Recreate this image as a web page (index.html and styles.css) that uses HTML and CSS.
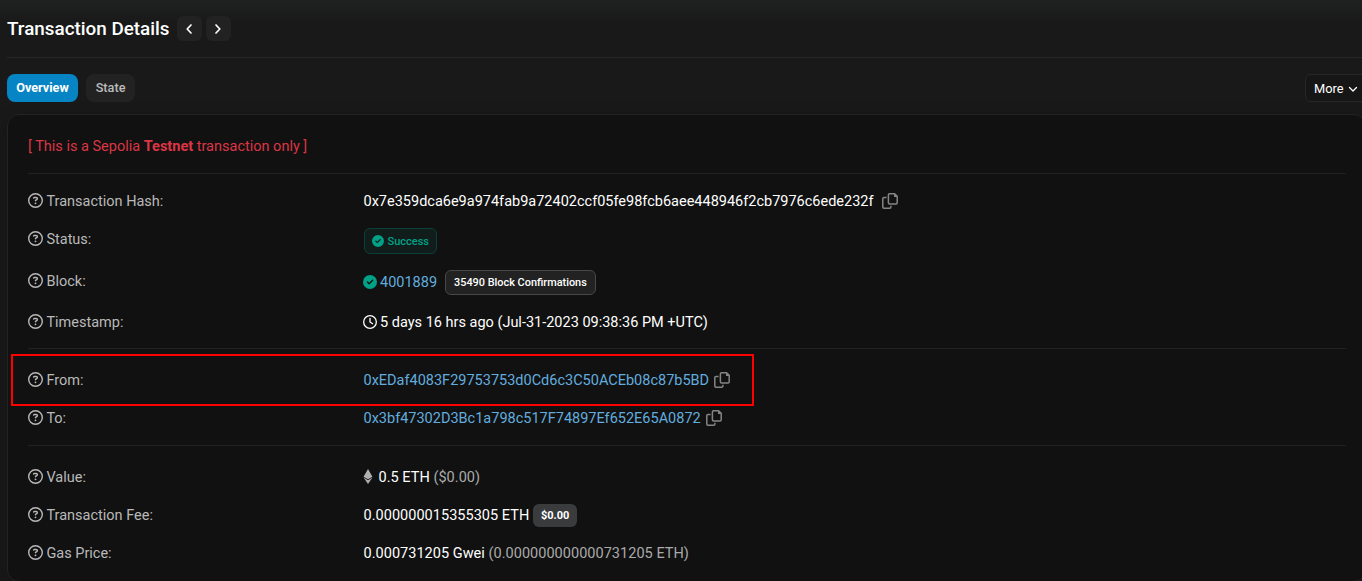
FILE: index.html
```html
<!DOCTYPE html>
<html lang="en">
<head>
<meta charset="utf-8">
<title>Transaction Details</title>
<link rel="stylesheet" href="styles.css">
</head>
<body>
<svg width="0" height="0" class="sprite" aria-hidden="true">
  <symbol id="help" viewBox="0 0 512 512"><path d="M464 256A208 208 0 1 0 48 256a208 208 0 1 0 416 0zM0 256a256 256 0 1 1 512 0A256 256 0 1 1 0 256zm169.8-90.7c7.9-22.3 29.1-37.3 52.8-37.3h58.3c34.9 0 63.1 28.3 63.1 63.1c0 22.6-12.1 43.5-31.7 54.8L280 264.4c-.2 13-10.9 23.6-24 23.6c-13.3 0-24-10.7-24-24V250.5c0-8.6 4.6-16.5 12.1-20.8l44.3-25.4c4.7-2.7 7.6-7.7 7.6-13.1c0-8.4-6.8-15.1-15.1-15.1H222.6c-3.4 0-6.4 2.1-7.5 5.3l-.4 1.2c-4.4 12.5-18.2 19-30.6 14.6s-19-18.2-14.6-30.6l.4-1.2zM224 352a32 32 0 1 1 64 0 32 32 0 1 1 -64 0z"/></symbol>
  <symbol id="check" viewBox="0 0 512 512"><path d="M256 512A256 256 0 1 0 256 0a256 256 0 1 0 0 512zM369 209L241 337c-9.4 9.4-24.6 9.4-33.9 0l-64-64c-9.4-9.4-9.4-24.6 0-33.9s24.6-9.4 33.9 0l47 47L335 175c9.4-9.4 24.6-9.4 33.9 0s9.4 24.6 0 33.9z"/></symbol>
  <symbol id="clock" viewBox="0 0 512 512"><path d="M464 256A208 208 0 1 1 48 256a208 208 0 1 1 416 0zM0 256a256 256 0 1 0 512 0A256 256 0 1 0 0 256zM232 120V256c0 8 4 15.5 10.7 20l96 64c11 7.4 25.9 4.4 33.3-6.7s4.4-25.9-6.7-33.3L280 243.2V120c0-13.3-10.7-24-24-24s-24 10.7-24 24z"/></symbol>
  <symbol id="eth" viewBox="0 0 320 512"><path d="M311.9 260.8L160 353.6 8 260.8 160 0l151.9 260.8zM160 383.4L8 290.6 160 512l152-221.4-152 92.8z"/></symbol>
  <symbol id="copy" viewBox="0 0 16 16"><path fill="none" stroke="currentColor" stroke-width="1.5" stroke-linejoin="round" d="M7.6.8h5l2.6 2.6v6.3a1.2 1.2 0 0 1-1.2 1.2H7.6a1.2 1.2 0 0 1-1.2-1.2V2A1.2 1.2 0 0 1 7.6.8zM4.6 4.4H2A1.2 1.2 0 0 0 .8 5.6V14A1.2 1.2 0 0 0 2 15.2h5.7A1.2 1.2 0 0 0 8.9 14v-1.3"/><path d="M12 .6v3.4h3.4z"/></symbol>
</svg>

<header class="page-head">
  <h1 class="title">Transaction Details</h1>
  <button class="nav-btn"><svg viewBox="0 0 10 12"><path d="M7 2 3.2 6 7 10"/></svg></button>
  <button class="nav-btn"><svg viewBox="0 0 10 12"><path d="M3 2 6.8 6 3 10"/></svg></button>
</header>

<nav class="tabs">
  <a class="tab tab-active">Overview</a>
  <a class="tab">State</a>
  <button class="more">More<svg viewBox="0 0 10 8"><path d="M1.5 2.5 5 6 8.5 2.5"/></svg></button>
</nav>

<main class="card">
  <p class="notice">[ This is a Sepolia <strong>Testnet</strong> transaction only ]</p>

  <section class="group group-main">
    <div class="row"><div class="label"><svg class="help"><use href="#help"/></svg>Transaction Hash:</div><div class="value"><span class="hash">0x7e359dca6e9a974fab9a72402ccf05fe98fcb6aee448946f2cb7976c6ede232f</span><svg class="copy copy-wide"><use href="#copy"/></svg></div></div>
    <div class="row row-status"><div class="label"><svg class="help"><use href="#help"/></svg>Status:</div><div class="value"><span class="badge-success"><svg><use href="#check"/></svg>Success</span></div></div>
    <div class="row row-block"><div class="label"><svg class="help"><use href="#help"/></svg>Block:</div><div class="value"><svg class="lead ok"><use href="#check"/></svg><a class="link">4001889</a><span class="badge-conf">35490 Block Confirmations</span></div></div>
    <div class="row row-time"><div class="label"><svg class="help"><use href="#help"/></svg>Timestamp:</div><div class="value"><svg class="lead"><use href="#clock"/></svg><span>5 days 16 hrs ago (Jul-31-2023 09:38:36 PM +UTC)</span></div></div>
  </section>

  <section class="group group-parties">
    <div class="row"><div class="label"><svg class="help"><use href="#help"/></svg>From:</div><div class="value"><a class="link">0xEDaf4083F29753753d0Cd6c3C50ACEb08c87b5BD</a><svg class="copy"><use href="#copy"/></svg></div><span class="highlight"></span></div>
    <div class="row"><div class="label"><svg class="help"><use href="#help"/></svg>To:</div><div class="value"><a class="link">0x3bf47302D3Bc1a798c517F74897Ef652E65A0872</a><svg class="copy"><use href="#copy"/></svg></div></div>
  </section>

  <section class="group group-cost">
    <div class="row"><div class="label"><svg class="help"><use href="#help"/></svg>Value:</div><div class="value"><svg class="eth"><use href="#eth"/></svg><span>0.5 ETH <span class="muted">($0.00)</span></span></div></div>
    <div class="row"><div class="label"><svg class="help"><use href="#help"/></svg>Transaction Fee:</div><div class="value"><span>0.000000015355305 ETH</span><span class="badge-usd">$0.00</span></div></div>
    <div class="row"><div class="label"><svg class="help"><use href="#help"/></svg>Gas Price:</div><div class="value"><span>0.000731205 Gwei <span class="muted">(0.000000000000731205 ETH)</span></span></div></div>
  </section>
</main>
</body>
</html>
```
FILE: styles.css
```css
* { box-sizing: border-box; }
html { background: #191919; }
body {
  margin: 0;
  height: 581px;
  padding-left: 7px;
  overflow: hidden;
  background: linear-gradient(#1f2120 0, #191919 22px);
  color: #fff;
  font: 14.5px/22px Roboto, "Liberation Sans", sans-serif;
}
svg { fill: currentColor; flex: none; }
.sprite { position: absolute; }
button { font: inherit; color: inherit; padding: 0; border: 0; }

.page-head {
  display: flex;
  align-items: center;
  height: 58px;
  border-bottom: 1px solid #272727;
}
.title { margin: 0 7px 0 0; font-size: 18.85px; font-weight: 500; line-height: 24px; }
.nav-btn {
  display: grid;
  place-items: center;
  width: 25px;
  height: 25px;
  margin-right: 4px;
  border-radius: 6px;
  background: #222;
}
.nav-btn svg { width: 10px; height: 12px; fill: none; stroke: #fff; stroke-width: 1.7; stroke-linecap: round; stroke-linejoin: round; }

.tabs { display: flex; align-items: center; height: 56px; padding-top: 3px; gap: 8px; }
.tab {
  height: 28px;
  padding: 0 9.8px;
  border-radius: 8px;
  background: #222;
  color: #bbb;
  font-size: 12.7px;
  font-weight: 500;
  line-height: 28px;
}
.tab-active { padding: 0 9.2px; background: #0784c3; color: #fff; font-weight: 700; letter-spacing: -.02px; }
.more {
  display: flex;
  align-items: center;
  gap: 5px;
  width: 66px;
  height: 28px;
  margin-left: auto;
  margin-right: -9px;
  padding: 2px 0 0 8px;
  border: 1px solid #272727;
  border-radius: 6px;
  background: #161616;
  font-size: 12.8px;
}
.more svg { width: 10px; height: 8px; fill: none; stroke: #fff; stroke-width: 1.3; stroke-linecap: round; stroke-linejoin: round; }

.card {
  width: 1359px;
  height: 468px;
  padding: 0 20px;
  border: 1px solid #232323;
  border-radius: 12px;
  background: #111;
  box-shadow: 0 8px 19px rgba(10, 10, 10, .3);
}
.notice { margin: 0; height: 58px; padding-top: 21px; color: #dc3545; }
.group { border-top: 1px solid #222; width: 1318px; }
.group-main { height: 175px; padding-top: 8px; }
.group-parties { height: 97px; padding-top: 12px; }
.group-cost { padding-top: 12px; }
.group-cost .value { letter-spacing: .03px; }

.row { position: relative; display: grid; grid-template-columns: 335.5px 1fr; align-items: center; height: 38px; }
.row-status { height: 42px; }
.row-status .label { padding-bottom: 2px; }
.row-block, .row-time { height: 40px; }
.label, .value { display: flex; align-items: center; padding-top: 2px; white-space: nowrap; }
.row-status .label, .row-block .label { padding-top: 0; }
.label { color: #b9b9b9; }
.label svg, .value > svg { margin-bottom: 3px; }
.help { width: 15px; height: 15px; margin-right: 3.4px; }
.link { color: #62addf; }
.muted { color: #aaa; }
.copy { width: 16px; height: 16px; margin-left: 5.2px; color: #858585; }
.copy-wide { margin-left: 8px; }
.value > .lead { width: 14px; height: 14px; margin: 0 3px 2px -.5px; }
.ok { color: #00a186; }
.value > .eth { width: 10px; height: 15px; margin: 0 5.5px 3px -.5px; color: #b0b0b0; }

.badge-success, .badge-conf, .badge-usd { display: flex; align-items: center; margin-bottom: 2px; font-weight: 500; letter-spacing: 0; }
.badge-success {
  height: 26px;
  padding: 1px 7.5px 0 7px;
  gap: 4px;
  border: 1px solid #0b4038;
  border-radius: 6px;
  background: #101d1b;
  color: #00a186;
  font-size: 11px;
}
.badge-success svg { width: 12px; height: 12px; margin-bottom: 1px; }
.badge-conf { height: 25px; margin-left: 8px; padding: 1px 8px 0; border: 1px solid #484848; border-radius: 6px; background: #222; font-size: 10.9px; }
.badge-usd { height: 23px; margin-left: 4px; padding: 1px 7.6px 0; border-radius: 6px; background: #3a3b3d; font-size: 11px; font-weight: 700; }

.highlight { position: absolute; left: -17px; top: -7px; width: 743px; height: 52px; border: 2px solid #f00; }
```
